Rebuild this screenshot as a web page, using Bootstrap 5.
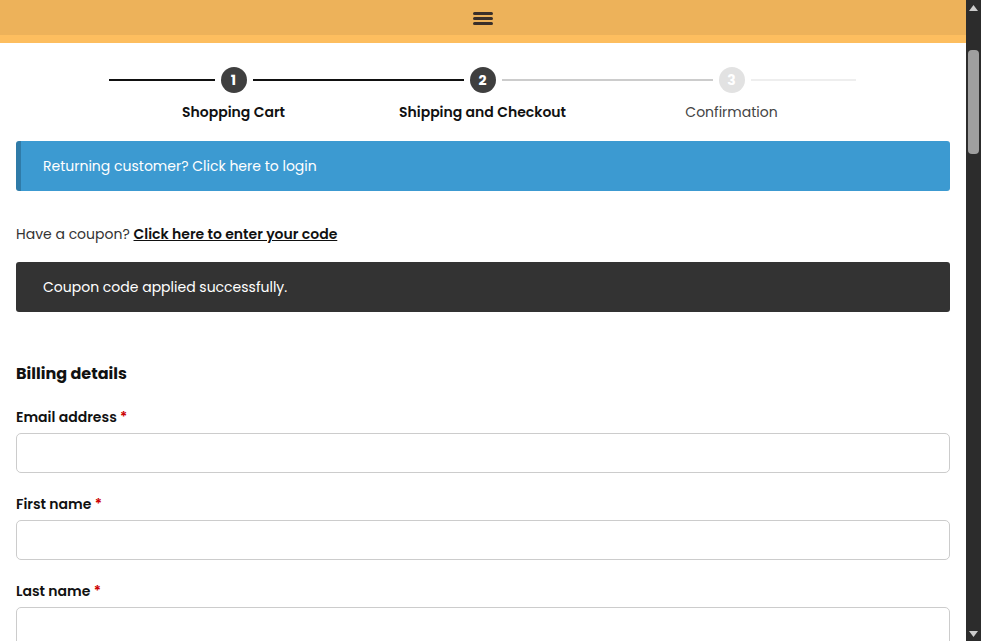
<!doctype html>
<html lang="en"><head><meta charset="utf-8">
<link href="https://cdn.jsdelivr.net/npm/bootstrap@5.3.0/dist/css/bootstrap.min.css" rel="stylesheet">
<style>
html,body{height:641px;overflow:hidden}
body{font-family:"Poppins","Open Sans","Noto Sans",sans-serif;background:#fff;color:#333;font-size:14px}
.shell{height:641px}
.pagearea{width:966px;height:641px;overflow:hidden}
.topbar{height:43px;background:#edb25a;border-bottom:8px solid #fdbe5f}
.burger{margin-top:10.5px}
.sbar{width:15px;height:641px;background:#2c2c2c}
.sbtn{height:15px;color:#ccc}
.strack{flex:1;padding:35px 2px 0}
.sthumb{height:104px;background:#9f9f9f;border-radius:4px}
.stepsrow{width:747px;margin:24px 0 0 109px}
.stepcol{width:249px}
.stepline{height:2px;flex:1}
.ln-dark{background:#111}.ln-mid{background:#ccc}.ln-light{background:#eee}
.stepdot{width:26px;height:26px;border-radius:50%;background:#3f3f3f;color:#fff;font-weight:700;font-size:14px;margin:0 6px}
.stepdot.off{background:#e2e2e2}
.steplabel{font-size:14px;font-weight:600;color:#111;margin-top:8px;line-height:22px}
.steplabel.off{font-weight:400;color:#444}
.formwrap{padding:0 16px}
.infobar{height:50px;background:#3c9ad1;border-left:5px solid #2f7ba8;color:#fff;border-radius:3px;padding-left:22px;margin-top:18px}
.darkbar{height:50px;background:#333;color:#fff;border-radius:3px;padding-left:27px}
.couponline{margin:32px 0 17px;line-height:22px}
.couponline a{color:#111;font-weight:600}
.billhead{font-size:16px;font-weight:700;color:#111;margin:50px 0 20px;line-height:24px}
.flabel{font-size:14px;font-weight:600;color:#111;line-height:22px;margin-bottom:5px}
.req{color:#c00}
.finput{height:40px;border:1px solid #ccc;border-radius:5px;margin-bottom:20px}
</style></head><body>
<div class="d-flex shell">
<div class="pagearea">
<div class="topbar d-flex justify-content-center">
<svg width="20" height="16" viewBox="0 0 20 16" class="burger"><rect x="0" y="1" width="20" height="3" rx="1.500" fill="#3a2f2a"/><rect x="0" y="6" width="20" height="3" rx="1.500" fill="#3a2f2a"/><rect x="0" y="11" width="20" height="3" rx="1.500" fill="#3a2f2a"/></svg>
</div>
<div class="stepsrow d-flex">
<div class="stepcol text-center"><div class="d-flex align-items-center"><span class="stepline ln-dark"></span><span class="stepdot d-flex align-items-center justify-content-center">1</span><span class="stepline ln-dark"></span></div><div class="steplabel">Shopping Cart</div></div>
<div class="stepcol text-center"><div class="d-flex align-items-center"><span class="stepline ln-dark"></span><span class="stepdot d-flex align-items-center justify-content-center">2</span><span class="stepline ln-mid"></span></div><div class="steplabel">Shipping and Checkout</div></div>
<div class="stepcol text-center"><div class="d-flex align-items-center"><span class="stepline ln-mid"></span><span class="stepdot off d-flex align-items-center justify-content-center">3</span><span class="stepline ln-light"></span></div><div class="steplabel off">Confirmation</div></div>
</div>
<div class="formwrap">
<div class="infobar d-flex align-items-center">Returning customer? Click here to login</div>
<div class="couponline">Have a coupon? <a href="#">Click here to enter your code</a></div>
<div class="darkbar d-flex align-items-center">Coupon code applied successfully.</div>
<div class="billhead">Billing details</div>
<div class="flabel">Email address <span class="req">*</span></div><div class="finput"></div>
<div class="flabel">First name <span class="req">*</span></div><div class="finput"></div>
<div class="flabel">Last name <span class="req">*</span></div><div class="finput"></div>
</div>
</div>
<div class="sbar d-flex flex-column">
<div class="sbtn d-flex align-items-center justify-content-center"><svg width="9" height="6" viewBox="0 0 9 6"><path d="M4.5 0L9 6H0z" fill="#ccc"/></svg></div>
<div class="strack"><div class="sthumb"></div></div>
<div class="sbtn d-flex align-items-center justify-content-center"><svg width="9" height="6" viewBox="0 0 9 6"><path d="M0 0H9L4.500 6z" fill="#ccc"/></svg></div>
</div>
</div>
<script src="https://cdn.jsdelivr.net/npm/bootstrap@5.3.0/dist/js/bootstrap.bundle.min.js"></script>
</body></html>
